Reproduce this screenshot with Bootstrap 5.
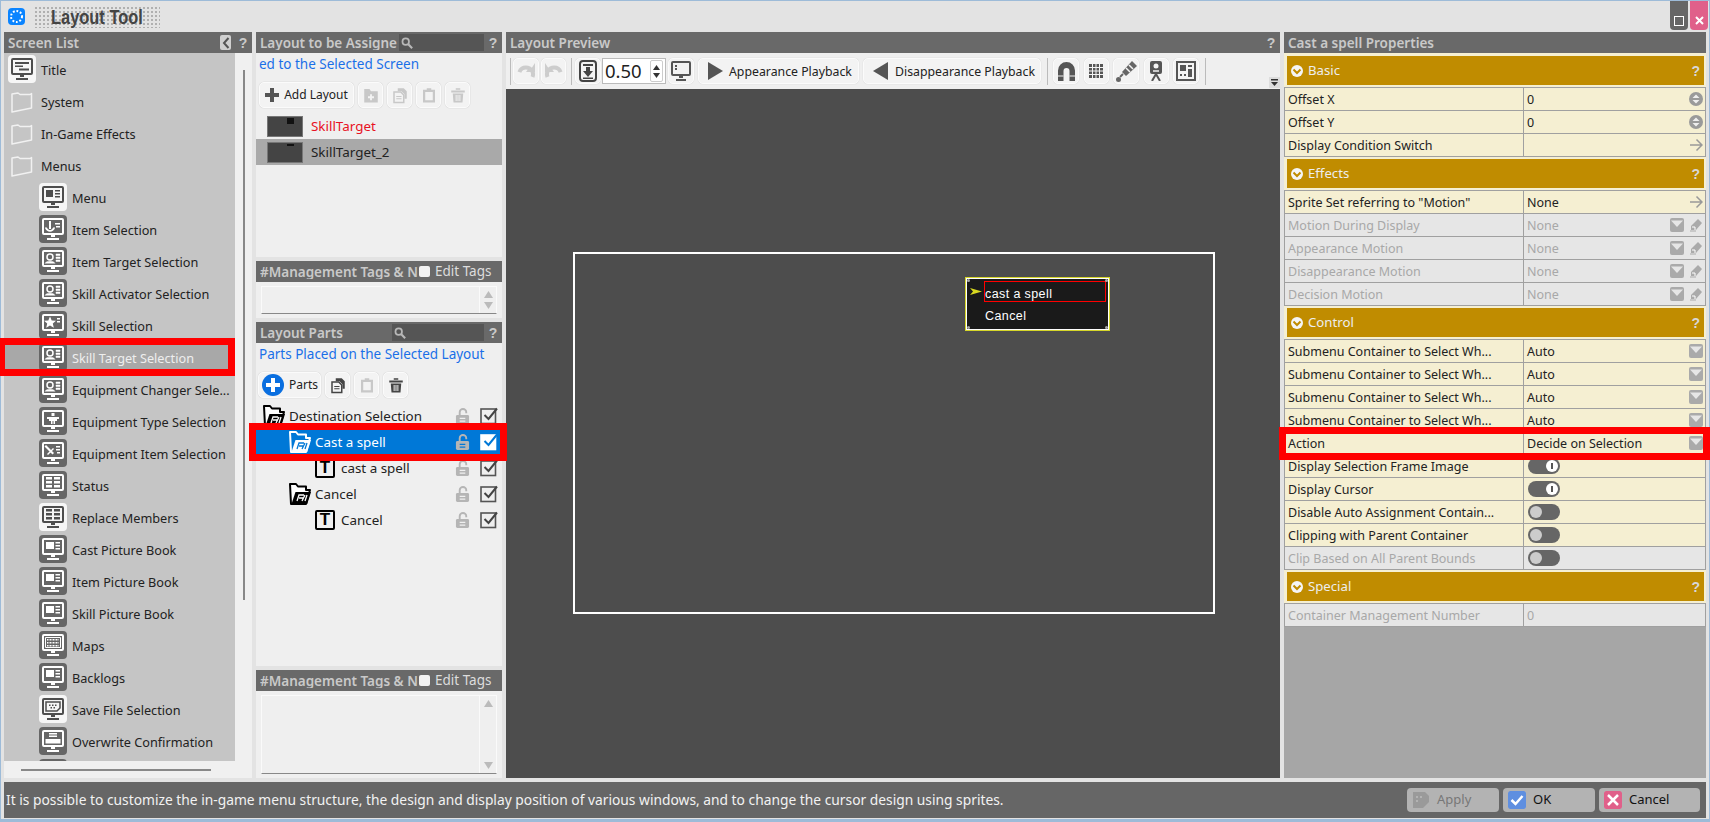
<!DOCTYPE html>
<html lang="en">
<head>
<meta charset="UTF-8">
<title>Layout Tool</title>
<link href="https://cdn.jsdelivr.net/npm/bootstrap@5.3.0/dist/css/bootstrap.min.css" rel="stylesheet">
<style>
html, body { margin: 0; height: 822px; overflow: hidden; background: #e3e3e3; }
body { font-family: "Noto Sans", sans-serif; font-size: 12.5px; color: #222; line-height: 1; }
svg { display: block; flex: none; }
.wnd { position: relative; width: 1710px; height: 822px; border: 1px solid #9dbbd8; border-bottom-width: 3px; background: #e3e3e3; }
.ttl { height: 31px; padding-left: 7px; }
.ttl-plate { margin-left: 9px; width: 126px; height: 22px; font: bold 20px/22px "Liberation Sans", sans-serif; color: #444; text-align: center;
  background-image: radial-gradient(#b0b0b0 1px, transparent 1.2px); background-size: 4px 4px; }
.ttl-plate span { display: inline-block; transform: scaleX(.82); }
.wbtn { width: 18px; height: 29px; border-radius: 0 0 4px 4px; margin-left: 2px; padding-top: 15px; }
.wmax { background: #666; }
.wclose { background: #e0608a; margin-right: 1px; }
.wmain { height: 746px; padding-left: 3px; gap: 4px; }
.pn-left { width: 248px; }
.pn-mid { width: 246px; }
.pn-prev { width: 774px; }
.pn-props { width: 422px; background: #a6a6a6; }
.pn-head { height: 21px; background: #696969; color: #c9c9c9; font-size: 13.5px; font-weight: 600; padding: 2px 0 0 4px; flex: none; white-space: nowrap; overflow: hidden; }
.pn-head .srch, .pn-head .pn-q, .pn-head .back-btn, .pn-head .tag-ck, .pn-head .tag-lbl { margin-top: -2px; }
.pn-q { font-family: "Liberation Sans", sans-serif; font-weight: 700; font-size: 14px; color: #c9c9c9; width: 18px; flex: none; text-align: center; }
.pn-cut { overflow: hidden; }
.srch { background: #555; height: 17px; padding-left: 2px; flex: none; margin-left: 2px; }
.back-btn { width: 11px; height: 15px; background: #d0d0d0; border-radius: 2px; margin-right: 3px; }
.scr-list { width: 231px; height: 708px; background: #c5c5c5; overflow: hidden; flex: none; }
.scr-row { height: 32px; padding: 2px 0 0 4px; gap: 5px; flex: none; white-space: nowrap; font-size: 12.7px; }
.scr-row svg { margin-top: -2px; }
.scr-row.sub { padding-left: 35px; }
.scr-row.on { background: #a8a8a8; color: #eee; }
.scr-row.cat { gap: 7px; padding-left: 6px; }
.mi { color: #666; --mb: #fff; }
.mi.lt { color: #f6f6f6; --mb: #4d4d4d; }
.vbar { width: 17px; background: #f0f0f0; padding-top: 17px; padding-left: 8px; }
.vthumb { width: 2px; height: 530px; background: #888; }
.hbar { height: 17px; background: #f0f0f0; padding: 8px 0 0 17px; flex: none; }
.hthumb { width: 190px; height: 2px; background: #888; }
.pane { background: #efefef; overflow: hidden; font-size: 13.4px; }
.blue-note { color: #1a6fe8; font-size: 13.5px; padding: 2px 0 0 3px; height: 21px; white-space: nowrap; }
.tb { padding-left: 3px; gap: 4px; margin-bottom: 5px; }
.tbtn { height: 26px; min-width: 25px; padding: 0; background: #f3f3f3; border: 1px solid #fbfbfb; border-radius: 5px; gap: 5px; font-size: 12px; color: #222; box-shadow: 0 0 0 .5px #e0e0e0; }
.lay-row { height: 26px; padding: 2px 0 0 11px; gap: 8px; }
.lay-row .thumb-box { margin-top: -2px; }
.lay-row.on { background: #a9a9a9; }
.thumb-box { width: 36px; height: 21px; background: #444; border: 1px solid #777; position: relative; }
.thumb-mk { position: absolute; right: 8px; top: 1px; width: 7px; background: #111; }
.red-txt { color: #e81123; }
.memo { padding: 4px 5px 4px; }
.memo-in { border: 1px solid #fafafa; border-bottom-color: #888; }
.memo-bar { width: 17px; border-left: 1px solid #fafafa; padding: 4px 0; }
.tag-ck { width: 11px; height: 11px; background: #f2f2f2; border-radius: 2px; flex: none; margin-left: 1px; }
.tag-lbl { color: #ddd; font-size: 13.5px; font-weight: 400; margin-left: 5px; }
.tree-row { height: 26px; padding: 2px 4px 0 0; white-space: nowrap; }
.tree-row > svg, .tree-row > .t-ico { margin-top: -2px; }
.tree-row.on { background: #0078d7; color: #fff; }
.ind1 { padding-left: 6px; }
.ind2 { padding-left: 32px; }
.ind3 { padding-left: 59px; }
.tree-row .fold-b { margin-right: 3px; }
.t-ico { width: 20px; height: 20px; border: 2px solid #000; border-radius: 2px; font: 900 17px/16px "Liberation Sans", sans-serif; color: #000; text-align: center; margin-right: 6px; flex: none; }
.lk { margin-right: 10px; }
.prev-tb { height: 36px; background: #efefef; padding-left: 3px; gap: 2px; position: relative; }
.tsep { width: 1px; height: 27px; background: #bbb; }
.pbtn { height: 26px; font-size: 12.3px; color: #222; background: #f3f3f3; border: 1px solid #fbfbfb; border-radius: 5px; padding: 0; box-shadow: 0 0 0 .5px #e4e4e4; }
.pbtn-txt { padding-top: 2px; }
.spin-box { width: 64px; height: 26px; background: #fff; border: 1px solid #bbb; font-size: 18.5px; padding-left: 2px; margin-left: -1px; }
.spin-bt { width: 13px; height: 22px; margin-right: 2px; border: 1px solid #ccc; border-radius: 2px; gap: 3px; }
.tool-set { gap: 4.500px; }
.tb-more { position: absolute; right: 0; bottom: 1px; }
.mg-l1 { margin-left: 1px; }
.mg-l2 { margin-left: 2px; }
.mg-l3 { margin-left: 3px; }
.mg-l4 { margin-left: 4px; }
.stage { background: #4d4d4d; position: relative; flex: 1 1 0; }
.scr-frame { position: absolute; left: 67px; top: 163px; width: 642px; height: 362px; border: 2px solid #fff; }
.game-win { position: absolute; left: 459px; top: 188px; width: 145px; height: 54px; background: #1a1a1a; border: 1px solid #d6d62a; box-shadow: inset 0 0 0 1px #fff; color: #fff; font: 12.5px "Liberation Sans", sans-serif; letter-spacing: .4px; }
.game-win > .gw-txt { position: absolute; left: 19px; }
.game-sel { position: absolute; left: 18px; top: 3px; width: 122px; height: 21px; border: 1px solid #f00; }
.game-cur { position: absolute; left: 4px; top: 10px; }
.gw-dot { position: absolute; width: 3px; height: 3px; background: #aaa; border-radius: 50%; }
.sec { background: #f5efd2; padding: 2px 2px 2px 3px; border-bottom: 1px solid #a0a0a0; flex: none; }
.sec.first { padding-top: 3px; }
.sec-in { height: 29px; background: #c08c00; color: #eee; font-size: 13.2px; padding: 1px 0 0 4px; gap: 5px; }
.sec-in svg { margin-top: -1px; }
.sec-q { margin-left: auto; color: #d8d8d8; font: 700 14px "Liberation Sans", sans-serif; margin-right: 4px; }
.prow { height: 23px; background: #f5efd2; border-bottom: 1px solid #a0a0a0; flex: none; }
.prow.off { background: #e6e6e6; color: #a8a8a8; }
.p-l { width: 240px; padding: 2px 0 0 3px; border-left: 1px solid #a0a0a0; border-right: 1px solid #a0a0a0; height: 100%; white-space: nowrap; overflow: hidden; flex: none; }
.p-v { flex: 1; padding: 2px 2px 0 3px; height: 100%; border-right: 1px solid #a0a0a0; gap: 5px; white-space: nowrap; }
.p-v > svg, .p-v > .tgl { margin-top: -3px; }
.p-v .fill { flex: 1; }
.tgl { width: 32px; height: 16px; border-radius: 8px; background: #666; padding: 2px; margin-left: 1px; }
.tgl span { width: 12px; height: 12px; border-radius: 50%; background: #ccc; }
.tgl.is-on { justify-content: flex-end; }
.tgl.is-on span { background: #fff; position: relative; }
.tgl.is-on span::after { content: ""; position: absolute; left: 5px; top: 3px; width: 2px; height: 6px; background: #555; }
.stat { height: 36px; margin: 4px 3px 0; background: #666; color: #f2f2f2; font-size: 13.800px; padding-left: 2px; }
.sbtn { height: 24px; background: #b3b3b3; border: 0; border-radius: 4px; padding: 0 0 0 5px; font-size: 13px; gap: 7px; color: #111; margin-right: 4px; }
.sbtn.dim { color: #777; }
.sb-ico { width: 18px; height: 18px; border-radius: 2px; }
.mark-box { position: absolute; border: 7px solid #f00; pointer-events: none; }
.mark-a { left: -1px; top: 337px; width: 235px; height: 38px; border-left-width: 5px; }
.mark-b { left: 248px; top: 422px; width: 258px; height: 38px; }
.mark-c { left: 1278px; top: 426px; width: 431px; height: 33px; }
</style>
</head>
<body>
<svg width="0" height="0" class="position-absolute">
  <defs>
    <symbol id="mon" viewBox="0 0 28 28">
      <rect width="28" height="28" rx="4" fill="currentColor"/>
      <rect x="4" y="4" width="20" height="15" rx="1" fill="none" stroke="var(--mb)" stroke-width="2"/>
      <path d="M12 20h4v2h-4zM8 23h12v2H8z" fill="var(--mb)"/>
    </symbol>
    <symbol id="g-menu" viewBox="0 0 28 28"><path d="M7 7h7v7H7zM16 7h5v1.500h-5zM16 10h5v1.500h-5zM16 13h5v1.500h-5z" fill="var(--mb)"/></symbol>
    <symbol id="g-list" viewBox="0 0 28 28"><path d="M7 7h14v2H7zM7 10.500h8v1.500H7zM11 13.500h10v2H11z" fill="var(--mb)"/></symbol>
    <symbol id="g-per" viewBox="0 0 28 28"><circle cx="11" cy="10" r="3" fill="none" stroke="var(--mb)" stroke-width="1.500"/><path d="M6 16.500c1-3 9-3 10 0M17 7h4v1.500h-4zM17 10h4v1.500h-4zM17 13h4v1.500h-4z" fill="var(--mb)" stroke="var(--mb)" stroke-width=".5"/></symbol>
    <symbol id="g-anc" viewBox="0 0 28 28"><path d="M10 6h2v8h-2zM6 13c2 5 8 5 10 0l-1-1-3 3h-2l-3-3zM16 8h5v1.500h-5zM17 11h4v1.500h-4z" fill="var(--mb)"/></symbol>
    <symbol id="g-star" viewBox="0 0 28 28"><path d="M11 5.500l1.700 3.900 4.300.4-3.200 2.800 1 4.100-3.800-2.200-3.800 2.200 1-4.100L5 9.800l4.300-.4zM18 7h3v1.500h-3zM18 10h3v1.500h-3z" fill="var(--mb)"/></symbol>
    <symbol id="g-body" viewBox="0 0 28 28"><path d="M12.500 6h3v3h-3zM8 10h12v2h-2v2h-2v3h-1.500v-3h-1v3H12v-3h-2v-2H8z" fill="var(--mb)"/></symbol>
    <symbol id="g-swd" viewBox="0 0 28 28"><path d="M7 6l8 8-1.500 1.500-8-8zM8 15l6-6 1 1-6 6zM17 7h4v1.500h-4zM17 10h4v1.500h-4zM18 13h3v1.500h-3z" fill="var(--mb)"/></symbol>
    <symbol id="g-tbl" viewBox="0 0 28 28"><path d="M7 6h6v2.500H7zM15 6h6v2.500h-6zM7 10h6v2.500H7zM15 10h6v2.500h-6zM7 14h6v2.500H7zM15 14h6v2.500h-6z" fill="var(--mb)"/></symbol>
    <symbol id="g-book" viewBox="0 0 28 28"><path d="M7 7h8v7H7zM16.500 7H21v1.500h-4.500zM16.500 10H21v1.500h-4.500zM16.500 13H21v1.500h-4.500z" fill="var(--mb)"/></symbol>
    <symbol id="g-map" viewBox="0 0 28 28"><path d="M6.500 6.500h15v10h-15z" fill="none" stroke="var(--mb)" stroke-width="1"/><path d="M8 8h12v1.500H8zM8 11h12v1.500H8zM8 14h12v1.500H8z" fill="var(--mb)"/><path d="M10 8v8M13 8v8M16 8v8M19 8v8" stroke="currentColor" stroke-width="1"/></symbol>
    <symbol id="g-save" viewBox="0 0 28 28"><path d="M7 7h14v6l-3 3H7z" fill="none" stroke="var(--mb)" stroke-width="1.500"/><path d="M10 9.500h1.500V11H10zM13 9.500h1.500V11H13zM16 9.500h1.500V11H16zM11.500 12h1.500v1.500h-1.500zM14.500 12H16v1.500h-1.500z" fill="var(--mb)"/></symbol>
    <symbol id="g-over" viewBox="0 0 28 28"><path d="M10 6h8v1.500h-8zM10 8.500h8V10h-8zM6.500 12h15v4.500h-15z" fill="var(--mb)"/></symbol>
    <symbol id="fold" viewBox="0 0 24 24"><path d="M2 5l6-1 2 1.500h10l1.500-1v14.500L2 23z" fill="none" stroke="#f1f1f1" stroke-width="1.500" stroke-linejoin="round"/></symbol>
    <symbol id="fold-b" viewBox="0 0 24 24"><path d="M2 2h6l2 2.500h8V8h4l-4 14H3z" fill="var(--fb)" stroke="currentColor" stroke-width="2" stroke-linejoin="round"/><path d="M7.500 10H23l-3.800 12H3.500z" fill="currentColor"/><path d="M9 19l2-6h5M11 16h4M14 19l3-6M17 19l2-6" stroke="var(--fb)" stroke-width="1.300" fill="none"/></symbol>
    <symbol id="lock" viewBox="0 0 16 18"><path d="M5 9V5a3.500 3.500 0 0 1 7 0v1" fill="none" stroke="currentColor" stroke-width="2"/><rect x="1" y="8" width="14" height="9.500" rx="1.500" fill="currentColor"/><path d="M5 11.500h6M5 14.500h6" stroke="var(--lb)" stroke-width="1.200"/></symbol>
    <symbol id="chk" viewBox="0 0 18 18"><rect x="1" y="2" width="14.500" height="14.500" fill="var(--cb)" stroke="var(--cs)" stroke-width="1.600"/><path d="M4.500 8l4 4L17 1.500" fill="none" stroke="var(--cc)" stroke-width="2"/></symbol>
    <symbol id="drp" viewBox="0 0 14 14"><rect width="14" height="14" rx="2" fill="currentColor"/><path d="M1 2.500h12L7 9z" fill="#fff" opacity=".7"/></symbol>
    <symbol id="pen" viewBox="0 0 14 14"><path d="M9 1l4 4-6 7H2V8z" fill="currentColor"/><path d="M3 9h3v3" fill="none" stroke="#fff" stroke-width="1"/><path d="M1 13h6" stroke="currentColor" stroke-width="1"/></symbol>
    <symbol id="spn" viewBox="0 0 14 14"><circle cx="7" cy="7" r="7" fill="#9a9a9a"/><path d="M3.500 6L7 2.500 10.500 6zM3.500 8L7 11.500 10.500 8z" fill="#eee"/></symbol>
    <symbol id="arr" viewBox="0 0 14 14"><path d="M1 7h11M7.500 1.500L13 7l-5.500 5.500" fill="none" stroke="#999" stroke-width="1.500"/></symbol>
    <symbol id="vdn" viewBox="0 0 12 12"><circle cx="6" cy="6" r="6" fill="#f5f5f5"/><path d="M2.500 4.500L6 8l3.500-3.500" fill="none" stroke="#c08c00" stroke-width="2"/></symbol>
    <symbol id="mag" viewBox="0 0 14 14"><circle cx="5.500" cy="5.500" r="3.800" fill="none" stroke="#b8b8b8" stroke-width="2"/><path d="M8.500 8.500L13 13" stroke="#b8b8b8" stroke-width="2.500"/></symbol>
    <symbol id="t-folder" viewBox="0 0 24 24"><path d="M3 4h7l2 3h9v15H3z" fill="currentColor"/><path d="M12 11v8M8 15h8" stroke="#f3f3f3" stroke-width="2.500"/></symbol>
    <symbol id="t-copy" viewBox="0 0 24 24"><path d="M9 3h8l4 4v10h-3v-6l-4-4H9z" fill="currentColor"/><path d="M4 8h9l4 4v10H4z" fill="none" stroke="currentColor" stroke-width="2"/><path d="M7 14h7M7 17h7" stroke="currentColor" stroke-width="1.500"/></symbol>
    <symbol id="t-paste" viewBox="0 0 24 24"><path d="M4 5h5V3h6v2h5v17H4z" fill="currentColor"/><rect x="7" y="8" width="10" height="11" fill="#f3f3f3"/></symbol>
    <symbol id="t-trash" viewBox="0 0 24 24"><path d="M3 6h18v2.500H3zM9 3h6v2H9zM5 10h14l-1 12H6z" fill="currentColor"/><path d="M9.500 12v8M12 12v8M14.500 12v8" stroke="#f3f3f3" stroke-width="1.300"/></symbol>
  </defs>
</svg>

<div class="wnd">
  <div class="ttl d-flex align-items-center">
    <svg width="17" height="17" viewBox="0 0 17 17"><rect width="17" height="17" rx="4" fill="#0a84ff"/><circle cx="8.500" cy="8.500" r="5.500" fill="none" stroke="#fff" stroke-width="2" stroke-dasharray="1.800 1.800"/></svg>
    <div class="ttl-plate"><span>Layout Tool</span></div>
    <div class="ms-auto d-flex align-self-start">
      <div class="wbtn wmax d-flex justify-content-center"><svg width="10" height="10" viewBox="0 0 10 10"><rect x=".5" y=".5" width="9" height="9" fill="none" stroke="#fff"/></svg></div>
      <div class="wbtn wclose d-flex justify-content-center"><svg width="9" height="9" viewBox="0 0 9 9"><path d="M1 1l7 7M8 1l-7 7" stroke="#fff" stroke-width="2"/></svg></div>
    </div>
  </div>

  <div class="wmain d-flex">
    <!-- screen list -->
    <div class="pn-left d-flex flex-column">
      <div class="pn-head d-flex align-items-center">
        <span class="flex-grow-1">Screen List</span>
        <span class="back-btn d-flex align-items-center justify-content-center"><svg width="8" height="12" viewBox="0 0 8 12"><path d="M6.500 1L2 6l4.500 5" fill="none" stroke="#555" stroke-width="2"/></svg></span>
        <span class="pn-q">?</span>
      </div>
      <div class="d-flex">
        <div class="scr-list">
          <div class="scr-row d-flex align-items-center"><svg class="mi lt" width="28" height="28"><use href="#mon"/><use href="#g-list"/></svg>Title</div>
          <div class="scr-row cat d-flex align-items-center"><svg width="24" height="24"><use href="#fold"/></svg>System</div>
          <div class="scr-row cat d-flex align-items-center"><svg width="24" height="24"><use href="#fold"/></svg>In-Game Effects</div>
          <div class="scr-row cat d-flex align-items-center"><svg width="24" height="24"><use href="#fold"/></svg>Menus</div>
          <div class="scr-row sub d-flex align-items-center"><svg class="mi lt" width="28" height="28"><use href="#mon"/><use href="#g-menu"/></svg>Menu</div>
          <div class="scr-row sub d-flex align-items-center"><svg class="mi" width="28" height="28"><use href="#mon"/><use href="#g-anc"/></svg>Item Selection</div>
          <div class="scr-row sub d-flex align-items-center"><svg class="mi" width="28" height="28"><use href="#mon"/><use href="#g-per"/></svg>Item Target Selection</div>
          <div class="scr-row sub d-flex align-items-center"><svg class="mi" width="28" height="28"><use href="#mon"/><use href="#g-per"/></svg>Skill Activator Selection</div>
          <div class="scr-row sub d-flex align-items-center"><svg class="mi" width="28" height="28"><use href="#mon"/><use href="#g-star"/></svg>Skill Selection</div>
          <div class="scr-row sub on d-flex align-items-center"><svg class="mi" width="28" height="28"><use href="#mon"/><use href="#g-per"/></svg>Skill Target Selection</div>
          <div class="scr-row sub d-flex align-items-center"><svg class="mi" width="28" height="28"><use href="#mon"/><use href="#g-per"/></svg>Equipment Changer Sele...</div>
          <div class="scr-row sub d-flex align-items-center"><svg class="mi" width="28" height="28"><use href="#mon"/><use href="#g-body"/></svg>Equipment Type Selection</div>
          <div class="scr-row sub d-flex align-items-center"><svg class="mi" width="28" height="28"><use href="#mon"/><use href="#g-swd"/></svg>Equipment Item Selection</div>
          <div class="scr-row sub d-flex align-items-center"><svg class="mi" width="28" height="28"><use href="#mon"/><use href="#g-tbl"/></svg>Status</div>
          <div class="scr-row sub d-flex align-items-center"><svg class="mi lt" width="28" height="28"><use href="#mon"/><use href="#g-tbl"/></svg>Replace Members</div>
          <div class="scr-row sub d-flex align-items-center"><svg class="mi" width="28" height="28"><use href="#mon"/><use href="#g-book"/></svg>Cast Picture Book</div>
          <div class="scr-row sub d-flex align-items-center"><svg class="mi" width="28" height="28"><use href="#mon"/><use href="#g-book"/></svg>Item Picture Book</div>
          <div class="scr-row sub d-flex align-items-center"><svg class="mi" width="28" height="28"><use href="#mon"/><use href="#g-book"/></svg>Skill Picture Book</div>
          <div class="scr-row sub d-flex align-items-center"><svg class="mi" width="28" height="28"><use href="#mon"/><use href="#g-map"/></svg>Maps</div>
          <div class="scr-row sub d-flex align-items-center"><svg class="mi" width="28" height="28"><use href="#mon"/><use href="#g-book"/></svg>Backlogs</div>
          <div class="scr-row sub d-flex align-items-center"><svg class="mi lt" width="28" height="28"><use href="#mon"/><use href="#g-save"/></svg>Save File Selection</div>
          <div class="scr-row sub d-flex align-items-center"><svg class="mi" width="28" height="28"><use href="#mon"/><use href="#g-over"/></svg>Overwrite Confirmation</div>
          <div class="scr-row sub d-flex align-items-center"><svg class="mi" width="28" height="28"><use href="#mon"/></svg></div>
        </div>
        <div class="vbar flex-grow-1"><div class="vthumb"></div></div>
      </div>
      <div class="hbar"><div class="hthumb"></div></div>
    </div>

    <!-- layouts and parts -->
    <div class="pn-mid d-flex flex-column">
      <div class="pn-head d-flex align-items-center">
        <span class="pn-cut flex-shrink-0 tag-w1">Layout to be Assigned</span>
        <span class="srch d-flex align-items-center srch-a"><svg width="12" height="12"><use href="#mag"/></svg></span>
        <span class="pn-q">?</span>
      </div>
      <div class="pane pane-a">
        <div class="blue-note d-flex align-items-center"><span>ed to the Selected Screen</span></div>
        <div class="tb d-flex mt-2">
          <button class="btn tbtn d-flex align-items-center justify-content-center add-lay"><svg width="14" height="14" viewBox="0 0 14 14"><path d="M5 0h4v5h5v4H9v5H5V9H0V5h5z" fill="#555"/></svg>Add Layout</button>
          <button class="btn tbtn d-flex align-items-center justify-content-center dim-ico"><svg width="18" height="18"><use href="#t-folder"/></svg></button>
          <button class="btn tbtn d-flex align-items-center justify-content-center dim-ico"><svg width="18" height="18"><use href="#t-copy"/></svg></button>
          <button class="btn tbtn d-flex align-items-center justify-content-center dim-ico"><svg width="18" height="18"><use href="#t-paste"/></svg></button>
          <button class="btn tbtn d-flex align-items-center justify-content-center dim-ico"><svg width="18" height="18"><use href="#t-trash"/></svg></button>
        </div>
        <div class="lay-row d-flex align-items-center"><div class="thumb-box"><div class="thumb-mk mk-a"></div></div><span class="red-txt">SkillTarget</span></div>
        <div class="lay-row on d-flex align-items-center"><div class="thumb-box"><div class="thumb-mk mk-b"></div></div><span>SkillTarget_2</span></div>
      </div>
      <div class="pn-head d-flex align-items-center mt-1">
        <span class="pn-cut flex-shrink-0 tag-w2">#Management Tags &amp; Notes</span>
        <span class="tag-ck"></span><span class="tag-lbl">Edit Tags</span>
      </div>
      <div class="pane memo d-flex memo-a">
        <div class="memo-in flex-grow-1 d-flex justify-content-end">
          <div class="memo-bar d-flex flex-column justify-content-between align-items-center">
            <svg width="9" height="7" viewBox="0 0 9 7"><path d="M0 7l4.500-7L9 7z" fill="#bbb"/></svg>
            <svg width="9" height="7" viewBox="0 0 9 7"><path d="M0 0l4.500 7L9 0z" fill="#bbb"/></svg>
          </div>
        </div>
      </div>
      <div class="pn-head d-flex align-items-center mt-1">
        <span class="flex-shrink-0 tag-w3">Layout Parts</span>
        <span class="srch d-flex align-items-center srch-b"><svg width="12" height="12"><use href="#mag"/></svg></span>
        <span class="pn-q">?</span>
      </div>
      <div class="pane flex-grow-1">
        <div class="blue-note d-flex align-items-center">Parts Placed on the Selected Layout</div>
        <div class="tb d-flex mt-2 tb-parts">
          <button class="btn tbtn d-flex align-items-center add-part"><svg width="22" height="22" viewBox="0 0 22 22"><circle cx="11" cy="11" r="11" fill="#0a6fe0"/><path d="M9 4h4v5h5v4h-5v5H9v-5H4V9h5z" fill="#fff"/></svg>Parts</button>
          <button class="btn tbtn d-flex align-items-center justify-content-center dark-ico"><svg width="18" height="18"><use href="#t-copy"/></svg></button>
          <button class="btn tbtn d-flex align-items-center justify-content-center dim-ico"><svg width="18" height="18"><use href="#t-paste"/></svg></button>
          <button class="btn tbtn d-flex align-items-center justify-content-center dark-ico"><svg width="18" height="18"><use href="#t-trash"/></svg></button>
        </div>
        <div class="tree-row ind1 d-flex align-items-center"><svg class="fold-b ico-plain" width="24" height="24"><use href="#fold-b"/></svg>Destination Selection<svg class="lk ms-auto ico-lock" width="15" height="18"><use href="#lock"/></svg><svg class="ico-chk" width="18" height="18"><use href="#chk"/></svg></div>
        <div class="tree-row on ind2 d-flex align-items-center"><svg class="fold-b ico-sel" width="24" height="24"><use href="#fold-b"/></svg>Cast a spell<svg class="lk ms-auto ico-lock" width="15" height="18"><use href="#lock"/></svg><svg class="ico-chk" width="18" height="18"><use href="#chk"/></svg></div>
        <div class="tree-row ind3 d-flex align-items-center"><span class="t-ico">T</span>cast a spell<svg class="lk ms-auto ico-lock" width="15" height="18"><use href="#lock"/></svg><svg class="ico-chk" width="18" height="18"><use href="#chk"/></svg></div>
        <div class="tree-row ind2 d-flex align-items-center"><svg class="fold-b ico-plain" width="24" height="24"><use href="#fold-b"/></svg>Cancel<svg class="lk ms-auto ico-lock" width="15" height="18"><use href="#lock"/></svg><svg class="ico-chk" width="18" height="18"><use href="#chk"/></svg></div>
        <div class="tree-row ind3 d-flex align-items-center"><span class="t-ico">T</span>Cancel<svg class="lk ms-auto ico-lock" width="15" height="18"><use href="#lock"/></svg><svg class="ico-chk" width="18" height="18"><use href="#chk"/></svg></div>
      </div>
      <div class="pn-head d-flex align-items-center mt-1">
        <span class="pn-cut flex-shrink-0 tag-w2">#Management Tags &amp; Notes</span>
        <span class="tag-ck"></span><span class="tag-lbl">Edit Tags</span>
      </div>
      <div class="pane memo d-flex memo-b">
        <div class="memo-in flex-grow-1 d-flex justify-content-end">
          <div class="memo-bar d-flex flex-column justify-content-between align-items-center">
            <svg width="9" height="7" viewBox="0 0 9 7"><path d="M0 7l4.500-7L9 7z" fill="#bbb"/></svg>
            <svg width="9" height="7" viewBox="0 0 9 7"><path d="M0 0l4.500 7L9 0z" fill="#bbb"/></svg>
          </div>
        </div>
      </div>
    </div>

    <!-- preview -->
    <div class="pn-prev d-flex flex-column">
      <div class="pn-head d-flex align-items-center">
        <span class="flex-grow-1">Layout Preview</span><span class="pn-q">?</span>
      </div>
      <div class="prev-tb d-flex align-items-center">
        <div class="tsep mg-l1"></div>
        <button class="btn pbtn d-flex align-items-center justify-content-center bw-26"><svg width="20" height="20" viewBox="0 0 20 20"><path d="M3 18A7 7 0 0 1 6 6l3-.5" fill="none" stroke="#ccc" stroke-width="0"/><path d="M5 17.500C2 10 6 6 11 6.500" fill="none" stroke="#cdcdcd" stroke-width="0"/><path d="M16.500 16a7 7 0 1 0-13 0" fill="none" stroke="#cdcdcd" stroke-width="4" transform="translate(0 0)" stroke-dasharray="22 40"/><path d="M16 3v9h-9l3-4 2 1z" fill="#cdcdcd" transform="translate(3 -1)"/></svg></button>
        <button class="btn pbtn d-flex align-items-center justify-content-center bw-25"><svg width="20" height="20" viewBox="0 0 20 20"><g transform="matrix(-1 0 0 1 20 0)"><path d="M16.500 16a7 7 0 1 0-13 0" fill="none" stroke="#cdcdcd" stroke-width="4" stroke-dasharray="22 40"/><path d="M16 3v9h-9l3-4 2 1z" fill="#cdcdcd" transform="translate(3 -1)"/></g></svg></button>
        <div class="tsep mg-l3"></div>
        <button class="btn pbtn d-flex align-items-center justify-content-center bw-26 mg-l1"><svg width="18" height="22" viewBox="0 0 18 22"><rect x="1" y="1" width="16" height="20" rx="3" fill="none" stroke="#444" stroke-width="2"/><path d="M4 4h10v2H4zM7 7h4v4h3l-5 6-5-6h3z" fill="#444"/><path d="M4 17.500h10v1.500H4z" fill="#444"/></svg></button>
        <div class="spin-box d-flex align-items-center justify-content-between"><span>0.50</span>
          <span class="spin-bt d-flex flex-column align-items-center justify-content-center"><svg width="7" height="5" viewBox="0 0 7 5"><path d="M0 5l3.500-5L7 5z" fill="#333"/></svg><svg width="7" height="5" viewBox="0 0 7 5"><path d="M0 0l3.500 5L7 0z" fill="#333"/></svg></span>
        </div>
        <button class="btn pbtn d-flex align-items-center justify-content-center bw-26"><svg width="20" height="20" viewBox="0 0 20 20"><rect x="1" y="1" width="18" height="13" rx="1" fill="none" stroke="#555" stroke-width="2"/><path d="M4 4h2v2H4zM4 7h2v2H4zM8 15h4v2H8zM5 18h10v2H5z" fill="#555"/></svg></button>
        <button class="btn pbtn pbtn-play d-flex align-items-center mg-l2 bw-a"><svg width="15" height="18" viewBox="0 0 15 18"><path d="M0 0l15 9L0 18z" fill="#555"/></svg><span class="pbtn-txt">Appearance Playback</span></button>
        <button class="btn pbtn pbtn-play d-flex align-items-center mg-l2 bw-b"><svg width="15" height="18" viewBox="0 0 15 18"><path d="M15 0L0 9l15 9z" fill="#555"/></svg><span class="pbtn-txt">Disappearance Playback</span></button>
        <div class="tsep mg-l4"></div>
        <div class="d-flex tool-set mg-l3">
          <button class="btn pbtn d-flex align-items-center justify-content-center bw-26"><svg width="17" height="19" viewBox="0 0 17 19"><path d="M0 8.500a8.500 8.500 0 0 1 17 0V19h-5.500V9a3 3 0 0 0-6 0v10H0z" fill="#555"/><path d="M0 14h5.500M11.500 14H17" stroke="#efefef" stroke-width="1"/></svg></button>
          <button class="btn pbtn d-flex align-items-center justify-content-center bw-25"><svg width="14" height="14" viewBox="0 0 14 14"><path d="M0 0h14v14H0z" fill="#555"/><path d="M3.500 0v14M7 0v14M10.500 0v14M0 3.500h14M0 7h14M0 10.500h14" stroke="#f3f3f3" stroke-width="1"/></svg></button>
          <button class="btn pbtn d-flex align-items-center justify-content-center bw-26"><svg width="23" height="23" viewBox="0 0 23 23"><path d="M17 1l5 5-11 10-4-4z" fill="#666"/><path d="M14 5l4 4M11 8l4 4" stroke="#f3f3f3" stroke-width="1.500"/><path d="M8 14l-3 3" stroke="#666" stroke-width="2"/><circle cx="3.500" cy="19.500" r="2.500" fill="#666"/></svg></button>
          <button class="btn pbtn d-flex align-items-center justify-content-center bw-25"><svg width="14" height="20" viewBox="0 0 14 20"><rect x="1" y="0" width="12" height="13" rx="2" fill="#555"/><circle cx="7" cy="5" r="2.500" fill="#f3f3f3"/><path d="M4 10h6" stroke="#f3f3f3" stroke-width="1.500"/><path d="M3 20l4-7 4 7" fill="none" stroke="#555" stroke-width="2"/></svg></button>
          <button class="btn pbtn d-flex align-items-center justify-content-center bw-26"><svg width="20" height="20" viewBox="0 0 20 20"><rect x="1" y="1" width="18" height="18" fill="none" stroke="#555" stroke-width="2"/><path d="M4 4h6v6H4zM12 4h4v2h-4zM12 8h4v8h-4zM4 13h2v2H4zM8 13h2v2H8z" fill="#555"/></svg></button>
        </div>
        <div class="tsep mg-l4"></div>
        <svg class="tb-more" width="11" height="11" viewBox="0 0 11 11"><rect width="11" height="11" fill="#ddd"/><path d="M2 2h7v1.500H2zM2 5h7L5.500 9z" fill="#333"/></svg>
      </div>
      <div class="stage">
        <div class="scr-frame"></div>
        <div class="game-win">
          <div class="game-sel"></div>
          <svg class="game-cur" width="12" height="7" viewBox="0 0 12 7"><path d="M0 0l12 3.500L0 7l3-3.500z" fill="#d8d820"/></svg>
          <div class="gw-txt gw-t1">cast a spell</div>
          <div class="gw-txt gw-t2">Cancel</div>
          <span class="gw-dot gd-a"></span><span class="gw-dot gd-b"></span><span class="gw-dot gd-c"></span><span class="gw-dot gd-d"></span>
        </div>
      </div>
    </div>

    <!-- properties -->
    <div class="pn-props d-flex flex-column">
      <div class="pn-head d-flex align-items-center">Cast a spell Properties</div>
      <div class="sec first"><div class="sec-in d-flex align-items-center"><svg width="12" height="12"><use href="#vdn"/></svg>Basic<span class="sec-q">?</span></div></div>
      <div class="prow d-flex align-items-center"><div class="p-l d-flex align-items-center">Offset X</div><div class="p-v d-flex align-items-center"><span class="fill">0</span><svg width="14" height="14"><use href="#spn"/></svg></div></div>
      <div class="prow d-flex align-items-center"><div class="p-l d-flex align-items-center">Offset Y</div><div class="p-v d-flex align-items-center"><span class="fill">0</span><svg width="14" height="14"><use href="#spn"/></svg></div></div>
      <div class="prow d-flex align-items-center"><div class="p-l d-flex align-items-center">Display Condition Switch</div><div class="p-v d-flex align-items-center"><span class="fill"></span><svg width="14" height="14"><use href="#arr"/></svg></div></div>
      <div class="sec"><div class="sec-in d-flex align-items-center"><svg width="12" height="12"><use href="#vdn"/></svg>Effects<span class="sec-q">?</span></div></div>
      <div class="prow d-flex align-items-center"><div class="p-l d-flex align-items-center">Sprite Set referring to "Motion"</div><div class="p-v d-flex align-items-center"><span class="fill">None</span><svg width="14" height="14"><use href="#arr"/></svg></div></div>
      <div class="prow off d-flex align-items-center"><div class="p-l d-flex align-items-center">Motion During Display</div><div class="p-v d-flex align-items-center"><span class="fill">None</span><svg class="ico-g" width="14" height="14"><use href="#drp"/></svg><svg class="ico-g" width="14" height="14"><use href="#pen"/></svg></div></div>
      <div class="prow off d-flex align-items-center"><div class="p-l d-flex align-items-center">Appearance Motion</div><div class="p-v d-flex align-items-center"><span class="fill">None</span><svg class="ico-g" width="14" height="14"><use href="#drp"/></svg><svg class="ico-g" width="14" height="14"><use href="#pen"/></svg></div></div>
      <div class="prow off d-flex align-items-center"><div class="p-l d-flex align-items-center">Disappearance Motion</div><div class="p-v d-flex align-items-center"><span class="fill">None</span><svg class="ico-g" width="14" height="14"><use href="#drp"/></svg><svg class="ico-g" width="14" height="14"><use href="#pen"/></svg></div></div>
      <div class="prow off d-flex align-items-center"><div class="p-l d-flex align-items-center">Decision Motion</div><div class="p-v d-flex align-items-center"><span class="fill">None</span><svg class="ico-g" width="14" height="14"><use href="#drp"/></svg><svg class="ico-g" width="14" height="14"><use href="#pen"/></svg></div></div>
      <div class="sec"><div class="sec-in d-flex align-items-center"><svg width="12" height="12"><use href="#vdn"/></svg>Control<span class="sec-q">?</span></div></div>
      <div class="prow d-flex align-items-center"><div class="p-l d-flex align-items-center">Submenu Container to Select Wh...</div><div class="p-v d-flex align-items-center"><span class="fill">Auto</span><svg class="ico-g" width="14" height="14"><use href="#drp"/></svg></div></div>
      <div class="prow d-flex align-items-center"><div class="p-l d-flex align-items-center">Submenu Container to Select Wh...</div><div class="p-v d-flex align-items-center"><span class="fill">Auto</span><svg class="ico-g" width="14" height="14"><use href="#drp"/></svg></div></div>
      <div class="prow d-flex align-items-center"><div class="p-l d-flex align-items-center">Submenu Container to Select Wh...</div><div class="p-v d-flex align-items-center"><span class="fill">Auto</span><svg class="ico-g" width="14" height="14"><use href="#drp"/></svg></div></div>
      <div class="prow d-flex align-items-center"><div class="p-l d-flex align-items-center">Submenu Container to Select Wh...</div><div class="p-v d-flex align-items-center"><span class="fill">Auto</span><svg class="ico-g" width="14" height="14"><use href="#drp"/></svg></div></div>
      <div class="prow d-flex align-items-center"><div class="p-l d-flex align-items-center">Action</div><div class="p-v d-flex align-items-center"><span class="fill">Decide on Selection</span><svg class="ico-g" width="14" height="14"><use href="#drp"/></svg></div></div>
      <div class="prow d-flex align-items-center"><div class="p-l d-flex align-items-center">Display Selection Frame Image</div><div class="p-v d-flex align-items-center"><div class="tgl is-on d-flex"><span></span></div></div></div>
      <div class="prow d-flex align-items-center"><div class="p-l d-flex align-items-center">Display Cursor</div><div class="p-v d-flex align-items-center"><div class="tgl is-on d-flex"><span></span></div></div></div>
      <div class="prow d-flex align-items-center"><div class="p-l d-flex align-items-center">Disable Auto Assignment Contain...</div><div class="p-v d-flex align-items-center"><div class="tgl d-flex"><span></span></div></div></div>
      <div class="prow d-flex align-items-center"><div class="p-l d-flex align-items-center">Clipping with Parent Container</div><div class="p-v d-flex align-items-center"><div class="tgl d-flex"><span></span></div></div></div>
      <div class="prow off d-flex align-items-center"><div class="p-l d-flex align-items-center">Clip Based on All Parent Bounds</div><div class="p-v d-flex align-items-center"><div class="tgl d-flex"><span></span></div></div></div>
      <div class="sec"><div class="sec-in d-flex align-items-center"><svg width="12" height="12"><use href="#vdn"/></svg>Special<span class="sec-q">?</span></div></div>
      <div class="prow off d-flex align-items-center"><div class="p-l d-flex align-items-center">Container Management Number</div><div class="p-v d-flex align-items-center"><span class="fill">0</span></div></div>
    </div>
  </div>

  <div class="stat d-flex align-items-center">
    <span class="flex-grow-1">It is possible to customize the in-game menu structure, the design and display position of various windows, and to change the cursor design using sprites.</span>
    <button class="btn sbtn dim d-flex align-items-center bs-a"><svg class="sb-ico" viewBox="0 0 18 18"><path d="M1 1h12l4 4v6l-6 6H1z" fill="#9a9a9a"/><path d="M4 5h2v2H4zM8 5h2v2H8zM4 9h2v2H4z" fill="#b3b3b3"/></svg>Apply</button>
    <button class="btn sbtn d-flex align-items-center bs-a"><svg class="sb-ico" viewBox="0 0 18 18"><rect width="18" height="18" rx="2" fill="#5f8fe0"/><path d="M3.500 9l4 4 7-8" fill="none" stroke="#fff" stroke-width="2.500"/></svg>OK</button>
    <button class="btn sbtn d-flex align-items-center bs-c"><svg class="sb-ico" viewBox="0 0 18 18"><rect width="18" height="18" rx="2" fill="#e0608a"/><path d="M4 4l10 10M14 4L4 14" stroke="#fff" stroke-width="2.500"/></svg>Cancel</button>
  </div>

  <div class="mark-box mark-a"></div>
  <div class="mark-box mark-b"></div>
  <div class="mark-box mark-c"></div>
</div>
<style>
.tag-w1 { width: 137px; }
.tag-w2 { width: 158px; color: #c9c9c9; }
.tag-w3 { width: 130px; }
.srch-a { width: 85px; }
.srch-b { width: 92px; }
.pane-a { height: 204px; }
.memo-a { height: 36px; }
.memo-b { height: 87px; }
.add-lay { width: 95px; }
.add-part { width: 63px; padding-left: 3px; }
.tb-parts { padding-left: 2px; }
.dim-ico { color: #c8c8c8; }
.dark-ico { color: #444; }
.mk-a { height: 6px; }
.mk-b { height: 2px; }
.ico-plain { color: #000; --fb: #fff; }
.ico-sel { color: #fff; --fb: #0078d7; }
.ico-lock { color: #b5b5b5; --lb: #efefef; }
.on .ico-lock { --lb: #0078d7; }
.ico-chk { --cb: transparent; --cs: #555; --cc: #444; }
.on .ico-chk { --cb: #fff; --cs: #fff; --cc: #0078d7; }
.ico-g { color: #aaa; }
.bw-25 { width: 25px; }
.bw-26 { width: 26px; }
.bw-a { width: 161px; padding-left: 9px; gap: 6px; }
.bw-b { width: 178px; padding-left: 9px; gap: 7px; }
.gw-t1 { top: 9px; }
.gw-t2 { top: 31px; }
.gd-a { left: 1px; top: 1px; }
.gd-b { right: 1px; top: 1px; }
.gd-c { left: 1px; bottom: 1px; }
.gd-d { right: 1px; bottom: 1px; }
.bs-a { width: 92px; }
.bs-c { width: 101px; margin-right: 6px; }
</style>
</body>
</html>
